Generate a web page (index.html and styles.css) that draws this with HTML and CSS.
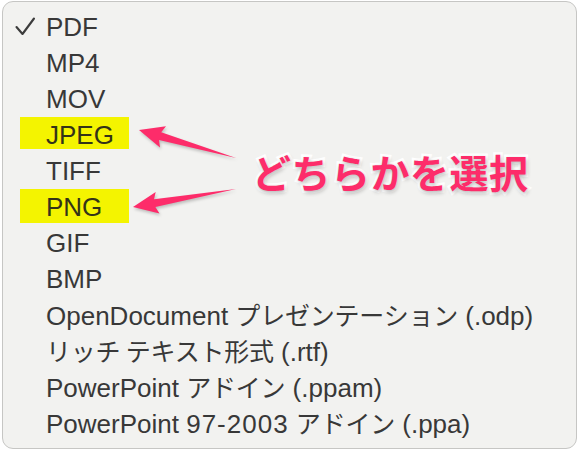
FILE: index.html
```html
<!DOCTYPE html>
<html lang="ja">
<head>
<meta charset="utf-8">
<link rel="stylesheet" href="styles.css">
</head>
<body>
<div class="menu">
  <ul class="items">
    <li class="item"><span class="check"><svg width="22" height="20" viewBox="0 0 22 20"><polyline points="1.5,10 7.5,17 19,1.5" fill="none" stroke="#3c3c3c" stroke-width="2.1" stroke-linecap="round" stroke-linejoin="round"/></svg></span><span class="label">PDF</span></li>
    <li class="item"><span class="check"></span><span class="label">MP4</span></li>
    <li class="item"><span class="check"></span><span class="label">MOV</span></li>
    <li class="item hl hl-a"><span class="check"></span><span class="label">JPEG</span></li>
    <li class="item"><span class="check"></span><span class="label">TIFF</span></li>
    <li class="item hl"><span class="check"></span><span class="label">PNG</span></li>
    <li class="item"><span class="check"></span><span class="label">GIF</span></li>
    <li class="item"><span class="check"></span><span class="label">BMP</span></li>
    <li class="item"><span class="check"></span><span class="label">OpenDocument <span class="ja">プレゼンテーション</span> (.odp)</span></li>
    <li class="item"><span class="check"></span><span class="label"><span class="ja">リッチ テキスト形式</span> (.rtf)</span></li>
    <li class="item"><span class="check"></span><span class="label">PowerPoint <span class="ja">アドイン</span> (.ppam)</span></li>
    <li class="item"><span class="check"></span><span class="label">PowerPoint <span class="num">97-2003</span> <span class="ja">アドイン</span> (.ppa)</span></li>
  </ul>
  <svg class="arrows" width="579" height="451" viewBox="0 0 579 451">
    <polygon points="139,130 166,126.3 161.2,132.3 236,158 159,140 160,147.5" fill="#fd2c6a"/>
    <polygon points="133,207 155.7,191.9 154,199.3 236,189 155.4,207.1 159.5,213.5" fill="#fd2c6a"/>
  </svg>
  <div class="note">どちらかを選択</div>
</div>
</body>
</html>
```

FILE: styles.css
```css
html, body {
  margin: 0;
  padding: 0;
  background: #ffffff;
}
body {
  width: 579px;
  height: 451px;
  overflow: hidden;
  font-family: "Liberation Sans", "Noto Sans CJK JP", sans-serif;
}
.menu {
  position: relative;
  margin: 1px 0 0 2px;
  width: 573px;
  height: 446px;
  border: 1px solid #c6c6c4;
  border-radius: 11px;
  background: #f2f2f0;
  box-sizing: content-box;
}
.items {
  list-style: none;
  margin: 0;
  padding: 7px 0 0 0;
  display: flex;
  flex-direction: column;
}
.item {
  height: 36px;
  display: flex;
  align-items: center;
  padding-left: 12px;
  color: #383838;
  font-size: 26px;
}
.check {
  width: 31px;
  display: flex;
  align-items: center;
}
.check svg {
  display: block;
  margin-top: -1px;
}
.label {
  white-space: nowrap;
  line-height: 36px;
}
.ja {
  font-family: "Noto Sans CJK JP", sans-serif;
  font-size: 25px;
  letter-spacing: -0.2px;
}
.num {
  letter-spacing: 1px;
}
.item.hl {
  background: linear-gradient(#f4f400, #f4f400) no-repeat 17px 0 / 109px 34px;
  color: #333318;
}
.item.hl-a {
  background-position: 17px -2px;
}
.arrows {
  position: absolute;
  left: -3px;
  top: -2px;
  filter: drop-shadow(1px 2px 1.5px rgba(0, 0, 0, 0.22));
}
.note {
  position: absolute;
  left: 249px;
  top: 141px;
  font-family: "Noto Sans CJK JP", sans-serif;
  font-weight: 700;
  font-size: 39px;
  line-height: 56px;
  color: #fd2c6a;
  letter-spacing: 0.5px;
  -webkit-text-stroke: 5px #ffffff;
  paint-order: stroke fill;
  text-shadow: 1px 2px 4px rgba(0, 0, 0, 0.3);
}
```
